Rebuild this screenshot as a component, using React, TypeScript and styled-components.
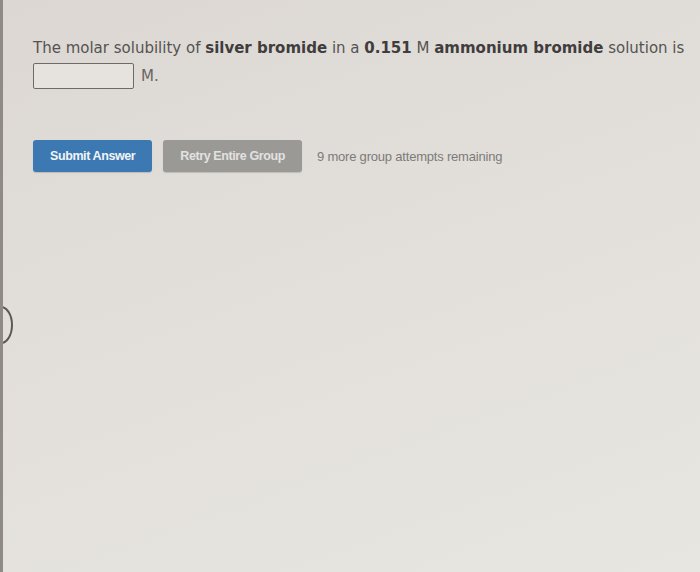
import React from "react";
import styled, { createGlobalStyle } from "styled-components";

const GlobalStyle = createGlobalStyle`
  html, body {
    margin: 0;
    padding: 0;
    height: 100%;
  }
  #root {
    height: 100%;
  }
`;

const Screen = styled.div`
  position: relative;
  width: 700px;
  height: 572px;
  overflow: hidden;
  box-sizing: border-box;
  padding: 36px 0 0 30px;
  background: linear-gradient(160deg, #dcd7d2 0%, #e2dfda 45%, #e8e6e1 100%);
  border-left: 3px solid #8f8a86;
`;

const Question = styled.div`
  font-family: "DejaVu Sans", Verdana, sans-serif;
  font-size: 15px;
  line-height: 24px;
  color: #555352;
  white-space: nowrap;
  b {
    color: #3f3d3d;
  }
`;

const AnswerRow = styled.div`
  display: flex;
  align-items: center;
  gap: 7px;
  margin-top: 3px;
`;

const AnswerBox = styled.div`
  width: 99px;
  height: 24px;
  border: 1.5px solid #6d6a68;
  border-radius: 2px;
  background: #e6e3df;
`;

const Unit = styled.span`
  font-family: "DejaVu Sans", Verdana, sans-serif;
  font-size: 15px;
  color: #686564;
`;

const Actions = styled.div`
  display: flex;
  align-items: center;
  margin-top: 51px;
`;

const Button = styled.button<{ $variant: "primary" | "muted" }>`
  font-family: "Liberation Sans", Arial, sans-serif;
  font-weight: 700;
  font-size: 12.5px;
  letter-spacing: -0.4px;
  height: 32px;
  padding: 0 17px;
  margin-right: ${(p) => (p.$variant === "primary" ? "11px" : "15px")};
  border: none;
  border-radius: 3px;
  color: ${(p) => (p.$variant === "primary" ? "#f2f4f6" : "#e2e2e0")};
  background: ${(p) => (p.$variant === "primary" ? "#3c79b3" : "#9b9996")};
  box-shadow: 0 1px 1px rgba(0, 0, 0, 0.15);
`;

const Remaining = styled.span`
  font-family: "Liberation Sans", Arial, sans-serif;
  font-size: 13px;
  letter-spacing: -0.2px;
  color: #7d7b79;
`;

const Glare = styled.div`
  position: absolute;
  left: -14px;
  top: 306px;
  width: 20px;
  height: 34px;
  border: 2px solid #5c5856;
  border-radius: 50%;
`;

export default function App() {
  return (
    <>
      <GlobalStyle />
      <Screen>
        <Question>
          The molar solubility of <b>silver bromide</b> in a <b>0.151</b> M{" "}
          <b>ammonium bromide</b> solution is
        </Question>
        <AnswerRow>
          <AnswerBox />
          <Unit>M.</Unit>
        </AnswerRow>
        <Actions>
          <Button $variant="primary">Submit Answer</Button>
          <Button $variant="muted">Retry Entire Group</Button>
          <Remaining>9 more group attempts remaining</Remaining>
        </Actions>
        <Glare />
      </Screen>
    </>
  );
}
